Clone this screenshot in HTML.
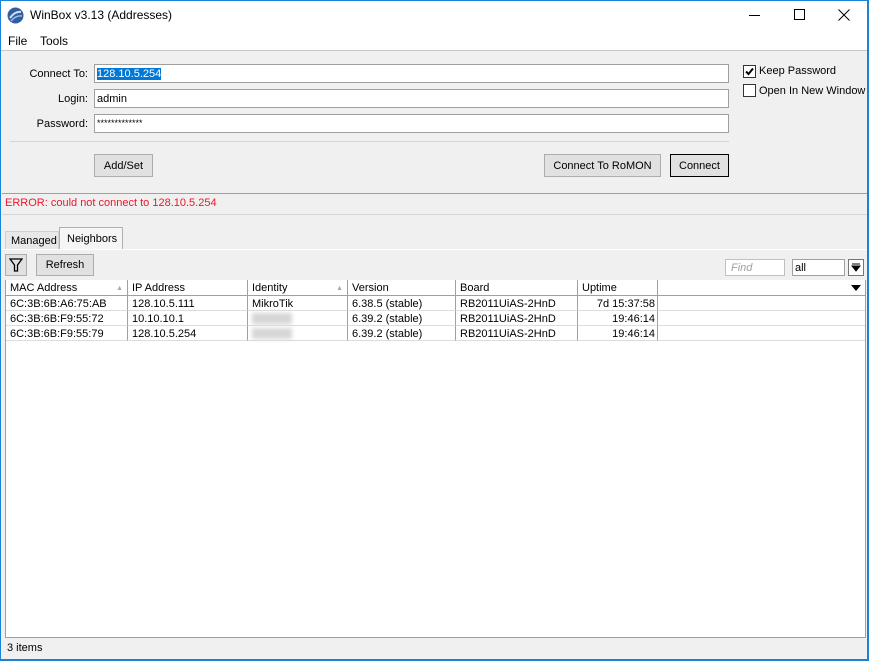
<!DOCTYPE html>
<html><head><style>
*{margin:0;padding:0;box-sizing:border-box}
body{width:869px;height:661px;position:relative;overflow:hidden;background:#f0f0f0;font-family:"Liberation Sans",sans-serif;font-size:11px;color:#000;white-space:nowrap}
.a{position:absolute}
.inp{position:absolute;background:#fff;border:1px solid #a0a0a0;height:19px;padding:2px 2px;line-height:15px}
.btn{position:absolute;background:#e1e1e1;border:1px solid #adadad;text-align:center;line-height:23px}
.cb{position:absolute;width:13px;height:13px;border:1px solid #333;background:#fff}
.th{position:absolute;top:280px;height:16px;border-right:1px solid #a0a0a0;border-bottom:1px solid #a0a0a0;padding-left:4px;line-height:17px;background:#fff}
.td{position:absolute;height:15px;border-right:1px solid #a0a0a0;border-bottom:1px solid #dcdcdc;padding-left:4px;line-height:16px;background:#fff}
.blur{position:absolute;background:#d6d6d6;filter:blur(2px)}
</style></head><body>
<div class="a" style="left:0;top:0;width:869px;height:51px;background:#fff"></div>
<div class="a" style="left:0;top:50px;width:869px;height:1px;background:#c8c8c8"></div>
<svg class="a" style="left:7px;top:7px" width="17" height="17" viewBox="0 0 17 17"><circle cx="8.5" cy="8.5" r="8" fill="#2e5f9e"/><path d="M3 11 Q8 4 14 5" stroke="#cfe0f5" stroke-width="2" fill="none"/><path d="M4 14 Q9 8 15 9" stroke="#9fbde6" stroke-width="1.5" fill="none"/></svg>
<div class="a" style="left:30px;top:8px;font-size:12px">WinBox v3.13 (Addresses)</div>
<div class="a" style="left:749px;top:15px;width:11px;height:1px;background:#000"></div>
<div class="a" style="left:794px;top:9px;width:11px;height:11px;border:1px solid #000"></div>
<svg class="a" style="left:838px;top:9px" width="12" height="12"><path d="M0.5 0.5L11.5 11.5M11.5 0.5L0.5 11.5" stroke="#000"/></svg>
<div class="a" style="left:8px;top:34px;font-size:12px">File</div>
<div class="a" style="left:40px;top:34px;font-size:12px">Tools</div>

<div class="a" style="left:0;top:68px;width:88px;text-align:right">Connect To:</div>
<div class="a" style="left:0;top:93px;width:88px;text-align:right">Login:</div>
<div class="a" style="left:0;top:118px;width:88px;text-align:right">Password:</div>
<div class="inp" style="left:94px;top:64px;width:635px"><span style="background:#0078d7;color:#fff">128.10.5.254</span></div>
<div class="inp" style="left:94px;top:89px;width:635px">admin</div>
<div class="inp" style="left:94px;top:114px;width:635px;font-size:9px;line-height:13px">*************</div>
<div class="a" style="left:10px;top:141px;width:719px;height:1px;background:#d5d5d5"></div>
<div class="btn" style="left:94px;top:154px;width:59px;height:23px">Add/Set</div>
<div class="btn" style="left:544px;top:154px;width:117px;height:23px">Connect To RoMON</div>
<div class="btn" style="left:670px;top:154px;width:59px;height:23px;border:1px solid #000">Connect</div>
<div class="cb" style="left:743px;top:65px"><svg width="11" height="11" style="position:absolute;left:0;top:0"><path d="M2 5.5L4.5 8L9 2.5" stroke="#000" stroke-width="2" fill="none"/></svg></div>
<div class="a" style="left:759px;top:65px">Keep Password</div>
<div class="cb" style="left:743px;top:84px"></div>
<div class="a" style="left:759px;top:85px">Open In New Window</div>

<div class="a" style="left:2px;top:193px;width:865px;height:1px;background:#a0a0a0"></div>
<div class="a" style="left:2px;top:214px;width:865px;height:1px;background:#d5d5d5"></div>
<div class="a" style="left:5px;top:197px;color:#f0152a">ERROR: could not connect to 128.10.5.254</div>

<div class="a" style="left:5px;top:231px;width:54px;height:19px;border:1px solid #d0d0d0;border-bottom:none;background:#e8e8e8;padding:3px 0 0 5px">Managed</div>
<div class="a" style="left:59px;top:227px;width:64px;height:23px;border:1px solid #b0b0b0;border-bottom:none;background:#f5f5f5;padding:5px 0 0 7px">Neighbors</div>
<div class="a" style="left:2px;top:249px;width:865px;height:1px;background:#fff"></div>
<div class="btn" style="left:5px;top:254px;width:22px;height:22px;line-height:20px"><svg width="14" height="16" style="margin-top:2px"><path d="M1 2H13L8.5 8V14H5.5V8Z" stroke="#000" fill="none" stroke-width="1.3"/></svg></div>
<div class="btn" style="left:36px;top:254px;width:58px;height:22px;line-height:21px">Refresh</div>
<div class="inp" style="left:725px;top:259px;width:60px;height:17px;line-height:13px;color:#a0a0a0;font-style:italic;padding-left:5px;border-color:#c0c0c0">Find</div>
<div class="inp" style="left:792px;top:259px;width:53px;height:17px;line-height:13px">all</div>
<div class="a" style="left:848px;top:259px;width:16px;height:17px;background:#fff;border:1px solid #777"><svg width="10" height="10" style="position:absolute;left:2px;top:3px"><path d="M1 1H9M1 3L5 8L9 3Z" stroke="#000" fill="#000"/></svg></div>

<div class="a" style="left:5px;top:280px;width:861px;height:358px;background:#fff;border:1px solid #a0a0a0"></div>
<div class="th" style="left:6px;width:122px">MAC Address<span style="position:absolute;right:4px;color:#aaa;font-size:7px">▲</span></div>
<div class="th" style="left:128px;width:120px">IP Address</div>
<div class="th" style="left:248px;width:100px">Identity<span style="position:absolute;right:4px;color:#aaa;font-size:7px">▲</span></div>
<div class="th" style="left:348px;width:108px">Version</div>
<div class="th" style="left:456px;width:122px">Board</div>
<div class="th" style="left:578px;width:80px">Uptime</div>
<div class="th" style="left:658px;width:207px;border-right:none"><svg width="10" height="6" style="position:absolute;right:4px;top:5px"><path d="M0 0H10L5 6Z"/></svg></div>

<div class="td" style="left:6px;top:296px;width:122px">6C:3B:6B:A6:75:AB</div>
<div class="td" style="left:128px;top:296px;width:120px">128.10.5.111</div>
<div class="td" style="left:248px;top:296px;width:100px">MikroTik</div>
<div class="td" style="left:348px;top:296px;width:108px">6.38.5 (stable)</div>
<div class="td" style="left:456px;top:296px;width:122px">RB2011UiAS-2HnD</div>
<div class="td" style="left:578px;top:296px;width:80px;text-align:right;padding-right:2px">7d 15:37:58</div>
<div class="td" style="left:658px;top:296px;width:207px;border-right:none"></div>

<div class="td" style="left:6px;top:311px;width:122px">6C:3B:6B:F9:55:72</div>
<div class="td" style="left:128px;top:311px;width:120px">10.10.10.1</div>
<div class="td" style="left:248px;top:311px;width:100px"><div class="blur" style="left:4px;top:2px;width:40px;height:11px"></div></div>
<div class="td" style="left:348px;top:311px;width:108px">6.39.2 (stable)</div>
<div class="td" style="left:456px;top:311px;width:122px">RB2011UiAS-2HnD</div>
<div class="td" style="left:578px;top:311px;width:80px;text-align:right;padding-right:2px">19:46:14</div>
<div class="td" style="left:658px;top:311px;width:207px;border-right:none"></div>

<div class="td" style="left:6px;top:326px;width:122px">6C:3B:6B:F9:55:79</div>
<div class="td" style="left:128px;top:326px;width:120px">128.10.5.254</div>
<div class="td" style="left:248px;top:326px;width:100px"><div class="blur" style="left:4px;top:2px;width:40px;height:11px"></div></div>
<div class="td" style="left:348px;top:326px;width:108px">6.39.2 (stable)</div>
<div class="td" style="left:456px;top:326px;width:122px">RB2011UiAS-2HnD</div>
<div class="td" style="left:578px;top:326px;width:80px;text-align:right;padding-right:2px">19:46:14</div>
<div class="td" style="left:658px;top:326px;width:207px;border-right:none"></div>

<div class="a" style="left:6px;top:637px;width:860px;height:21px;background:#f0f0f0;border-top:1px solid #a0a0a0"></div>
<div class="a" style="left:7px;top:642px">3 items</div>

<div class="a" style="left:0;top:0;width:869px;height:661px;border:1px solid #1883d7;border-right-width:2px;border-bottom-width:2px"></div>
</body></html>
